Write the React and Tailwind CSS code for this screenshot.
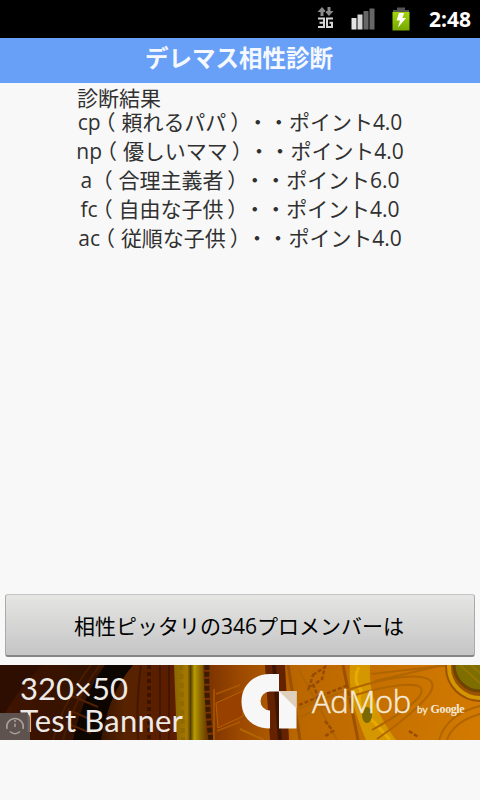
const RESULTS = [
  { key: 'cp', prefix: 'cp', name: '頼れるパパ', points: '4.0' },
  { key: 'np', prefix: 'np', name: '優しいママ', points: '4.0' },
  { key: 'a', prefix: 'a ', name: '合理主義者', points: '6.0' },
  { key: 'fc', prefix: 'fc', name: '自由な子供', points: '4.0' },
  { key: 'ac', prefix: 'ac', name: '従順な子供', points: '4.0' },
]

function StatusBar() {
  return (
    <div className="flex h-[38px] items-center justify-end bg-black pr-[9px]">
      <svg width="18" height="24" viewBox="0 0 18 24" className="mr-[16px]">
        <path d="M5 0 9.5 5H6.5V9H3.5V5H0.5ZM12 9 16.5 4H13.5V0H10.5V4H7.5Z" fill="#8a8a8a" />
        <path
          d="M1 11.500H7V20H1M2.500 15.700H7M16 11.500H10V20H15V15.700H12.500"
          fill="none"
          stroke="#d4d4d4"
          strokeWidth="2"
        />
      </svg>
      <svg width="24" height="22" viewBox="0 0 24 22" className="mr-[17px]">
        <path d="M0.5 10H5.5V21.5H0.5Z" fill="#e2e2e2" />
        <path d="M6.500 6.500H11.500V21.500H6.500Z" fill="#d6d6d6" />
        <path d="M12.500 3H17.500V21.500H12.500ZM18.500 0.500H23.500V21.500H18.500Z" fill="#666" />
      </svg>
      <svg width="18" height="24" viewBox="0 0 18 24" className="mr-[19px]">
        <defs>
          <linearGradient id="battery" x1="0" y1="0" x2="0" y2="1">
            <stop offset="0" stopColor="#a2d60c" />
            <stop offset="1" stopColor="#76a800" />
          </linearGradient>
        </defs>
        <path d="M1 5V3H5V0.500H13V3H17V5Z" fill="#555" />
        <path d="M0.500 5H17.500V23.500H0.500Z" fill="url(#battery)" />
        <path d="M7 6H12L10.500 11H14L6 20.500L8 13.500H4.500Z" fill="#fff" />
      </svg>
      <span className="pt-[1px] text-[21px] leading-none font-bold text-white">2:48</span>
    </div>
  )
}

function AdBanner() {
  return (
    <div className="relative h-[75px] w-[480px] overflow-hidden bg-[#b86400]">
      <svg width="480" height="75" viewBox="0 0 480 75" className="absolute inset-0">
        <defs>
          <linearGradient id="wall" x1="0" y1="0" x2="1" y2="0">
            <stop offset="0" stopColor="#401400" />
            <stop offset="0.2" stopColor="#321200" />
            <stop offset="0.26" stopColor="#572300" />
            <stop offset="0.36" stopColor="#5c1c00" />
            <stop offset="0.43" stopColor="#7a3200" />
            <stop offset="0.5" stopColor="#9c4900" />
            <stop offset="0.62" stopColor="#bb6700" />
            <stop offset="1" stopColor="#d27a00" />
          </linearGradient>
          <linearGradient id="column" x1="0" y1="0" x2="1" y2="0">
            <stop offset="0" stopColor="#8a6500" />
            <stop offset="0.4" stopColor="#a67900" />
            <stop offset="0.5" stopColor="#554000" />
            <stop offset="0.62" stopColor="#b99a00" />
            <stop offset="0.8" stopColor="#8c6900" />
            <stop offset="1" stopColor="#6b3b00" />
          </linearGradient>
        </defs>
        <path d="M0 0H480V75H0Z" fill="url(#wall)" />
        <path d="M0 0H42Q15 26 0 58Z" fill="#2d0e00" />
        <path d="M105 0H133Q108 30 101 75H73Q82 32 105 0Z" fill="#0d0500" />
        <path d="M53 75Q64 35 91 0M63 75Q74 35 100 0" fill="none" stroke="#4a1c00" strokeWidth="2" />
        <path d="M70 30 98 42M68 45 95 56M66 58 91 68" stroke="#521f00" strokeWidth="2" />
        <path d="M141 0Q136 35 138 75M160 0V75M169 0V75" fill="none" stroke="#431600" strokeWidth="2" />
        <path d="M149 0V75" stroke="#3b1400" strokeWidth="4" strokeDasharray="4 3" />
        <path d="M174 0H203L207 75H177Z" fill="url(#column)" />
        <path d="M181 0 183 75" stroke="#8f6a00" strokeWidth="4" strokeDasharray="5 4" />
        <path d="M207 0Q206 35 211 75" fill="none" stroke="#3b1c00" strokeWidth="5" strokeDasharray="5 2" />
        <path d="M216 29 240 20M217 66 240 57M214 24V75" fill="none" stroke="#ac5800" strokeWidth="1.500" />
        <path d="M216 38 243 26V51L218 63Z" fill="#984000" stroke="#b76000" />
        <path d="M265 0H285L289 75H270Z" fill="#642200" />
        <path d="M274 0 280 75" stroke="#3e1500" strokeWidth="4" />
        <path d="M288 0 300 75M343 0 358 75" stroke="#9c5100" strokeWidth="3" />
        <path d="M350 0H370Q367 37 396 75H366Q347 31 350 0Z" fill="#d49700" />
        <path d="M359 2Q352 15 361 25Q354 43 374 57L390 75" fill="none" stroke="#e9aa00" strokeWidth="3" />
        <ellipse cx="367" cy="50" rx="5" ry="8" fill="#7a6800" />
        <g fill="none" stroke="#b06500" strokeWidth="2">
          <path d="M299 44Q360 17 403 12Q441 9 430 28Q417 46 377 74" />
          <path d="M300 52Q360 24 402 20Q429 18 419 32Q408 45 372 65" />
          <path d="M371 9 450 0M375 16 439 1M439 75Q447 49 480 41M447 75Q453 57 480 49" />
          <path d="M299 5 337 75M240 64 264 75" />
        </g>
        <g fill="none" stroke="#964b00" strokeWidth="2.500" strokeDasharray="4 2">
          <path d="M313 10 325 2 322 14 309 23ZM313 19 318 32M325 56 333 66 324 72M409 66 418 72" />
          <path d="M299 40 348 20" />
        </g>
        <circle cx="480" cy="2" r="35" fill="#9b5200" />
        <circle cx="480" cy="2" r="31" fill="none" stroke="#d49600" strokeWidth="4" />
        <circle cx="480" cy="0" r="26" fill="#7e6e00" stroke="#6e4400" strokeWidth="3" />
        <path d="M460 0 480 18M471 0 480 8" stroke="#957500" strokeWidth="2" />
        <path
          fillRule="evenodd"
          d="M279 9V26.500H270A9.500 9.500 0 1 0 270 45.500V63.500C252 63.500 241.500 52 241.500 36.500C241.500 20 254 9 270 9Z"
          fill="#f7f7f7"
        />
        <path d="M279 26H296.500V63.500H279Z" fill="#f7f7f7" />
        <path d="M279 26H296.500V43.500Z" fill="#dfd0bc" />
      </svg>
      <div className="absolute top-[7px] left-[20px] font-[Lato,sans-serif] text-[31px] leading-[32px] text-[#eeeae7]">
        <p>320×50</p>
        <p className="tracking-[0.2px]">Test Banner</p>
      </div>
      <div className="absolute top-[15px] left-[312px] flex items-baseline text-[#f5e9d7]">
        <span className="font-['Open_Sans',sans-serif] text-[31px] leading-[42px] font-light tracking-[-0.3px] [-webkit-text-stroke:0.5px_#f5e9d7]">
          AdMob
        </span>
        <span className="ml-[6px] font-[Lato,sans-serif] text-[10px] [-webkit-text-stroke:0.3px_#f5e9d7]">by</span>
        <span className="ml-[3px] font-['Liberation_Serif',serif] text-[12px] font-bold tracking-[-0.4px]">Google</span>
      </div>
      <div className="absolute bottom-0 left-0 h-[27px] w-[30px] rounded-tr-[5px] bg-[#625a56]/90">
        <svg width="30" height="27" viewBox="0 0 30 27" fill="none" stroke="#aaa19b" strokeWidth="1.500">
          <path d="M7 16A8.300 8.300 0 1 1 23 16M10 18.500Q15 23 20 18.500M15 10.500V14M15 7V9" />
        </svg>
      </div>
    </div>
  )
}

export default function App() {
  return (
    <div className="flex h-[800px] w-[480px] flex-col overflow-hidden bg-[#f8f8f8] font-['Open_Sans','Noto_Sans_CJK_JP',sans-serif] [text-spacing-trim:space-all]">
      <StatusBar />
      <header className="flex h-[45px] items-center justify-center bg-[#689ff7] pr-[2px] pb-[3px]">
        <h1 className="text-[23.5px] leading-none font-bold whitespace-nowrap text-[#f5f9ff]">デレマス相性診断</h1>
      </header>
      <main className="flex-1 pt-[3px] text-[21px] text-[#303030]">
        <h2 className="pl-[77px] leading-[25px]">診断結果</h2>
        <ul>
          {RESULTS.map((r) => (
            <li key={r.key} className="h-[29px] text-center leading-[23px] tracking-[-0.05px] whitespace-pre">
              {r.prefix}
              <span className="mr-[6px] ml-[4.5px] [font-feature-settings:'halt']">（</span>
              {r.name}
              <span className="mr-[6.5px] ml-[4px] [font-feature-settings:'halt']">）</span>
              ・・ポイント{r.points}
            </li>
          ))}
        </ul>
      </main>
      <div className="px-[5px] pb-[8px]">
        <button className="block h-[63px] w-full rounded-[3px] border border-[#aaa] border-t-[#c4c4c4] border-b-2 border-b-[#858585] bg-linear-to-b from-[#e5e6e4] to-[#c5c5c5] pt-[4px] pr-[2px] text-[21px] text-black">
          相性ピッタリの346プロメンバーは
        </button>
      </div>
      <AdBanner />
      <div className="h-[60px]" />
    </div>
  )
}
